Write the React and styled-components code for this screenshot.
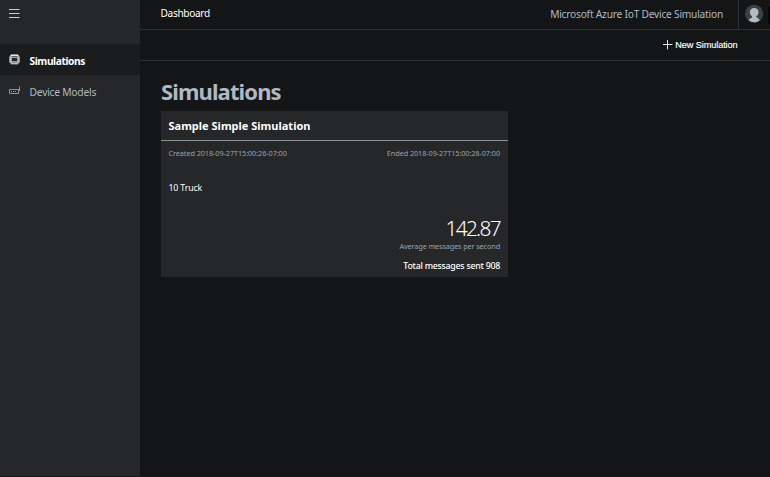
import React from "react";
import styled, { createGlobalStyle } from "styled-components";

const GlobalStyle = createGlobalStyle`
  * { box-sizing: border-box; }
  body {
    margin: 0;
    background: #131516;
    color: #fff;
    font-family: "Noto Sans", "Open Sans", sans-serif;
    font-kerning: normal;
    overflow: hidden;
  }
`;

const Shell = styled.div`
  display: flex;
  height: 477px;
  border-bottom: 1px solid #1b191b;
`;

const Sidebar = styled.nav`
  width: 140px;
  flex: none;
  background: #252729;
`;

const MenuButton = styled.button`
  display: flex;
  align-items: flex-start;
  width: 100%;
  height: 44px;
  padding: 9px 9px 0;
  border: 0;
  background: none;
`;

const NavItem = styled.a`
  display: flex;
  align-items: center;
  height: 31px;
  padding: 2px 0 0 9px;
  gap: 9.5px;
  background: ${(p) => (p.$active ? "#1b1c1e" : "transparent")};
  color: ${(p) => (p.$active ? "#fff" : "#afb9c3")};
  font-size: ${(p) => (p.$active ? "10.2px" : "10.3px")};
  font-weight: ${(p) => (p.$active ? 700 : 400)};
  letter-spacing: ${(p) => (p.$active ? "-0.4px" : "-0.24px")};
  white-space: nowrap;

  svg { margin-top: -3px; }
`;

const Main = styled.main`
  flex: 1;
  min-width: 0;
`;

const Header = styled.header`
  display: flex;
  align-items: stretch;
  height: 30px;
  border-bottom: 1px solid #2e3032;
`;

const Crumb = styled.div`
  flex: 1;
  padding: 0 0 0 20.5px;
  font-size: 10.1px;
  line-height: 27px;
  letter-spacing: -0.32px;
`;

const Product = styled.div`
  padding-right: 15px;
  color: #afb9c3;
  font-size: 10.2px;
  line-height: 29px;
  letter-spacing: -0.22px;
`;

const Profile = styled.div`
  display: flex;
  width: 32px;
  padding: 4px 0 0 6px;
  border-left: 1px solid #2e3032;
`;

const Focus = styled.div`
  width: 2px;
  height: 17px;
  margin: 3px 0 0 4px;
  background: #070809;
`;

const Toolbar = styled.div`
  display: flex;
  align-items: center;
  justify-content: flex-end;
  height: 31px;
  padding-right: 32.5px;
  border-bottom: 1px solid #2e3032;
`;

const ToolButton = styled.button`
  display: flex;
  align-items: center;
  gap: 2.5px;
  padding: 0;
  border: 0;
  background: none;
  color: #fff;
  font: 9.2px "Liberation Sans", sans-serif;
  letter-spacing: -0.12px;
  -webkit-text-stroke: 0.15px #fff;
`;

const Content = styled.section`
  padding: 15px 0 0 21px;
`;

const Title = styled.h1`
  margin: 0;
  height: 35px;
  color: #afb9c3;
  font-size: 22px;
  font-weight: 700;
  line-height: 31px;
  letter-spacing: -0.88px;
`;

const Card = styled.article`
  display: flex;
  flex-direction: column;
  width: 347px;
  height: 166px;
  background: #252729;
`;

const CardTitle = styled.h2`
  margin: 0;
  padding-left: 7.5px;
  height: 30px;
  border-bottom: 1px solid #8b9699;
  font-size: 11px;
  font-weight: 700;
  line-height: 30px;
`;

const Dates = styled.div`
  display: flex;
  justify-content: space-between;
  padding: 6px 8px 0 7.5px;
  color: #9aa2aa;
  font-size: 7.3px;
  line-height: 12px;
  letter-spacing: -0.08px;
`;

const Devices = styled.div`
  padding: 23px 0 0 7.5px;
  font-size: 8.8px;
  line-height: 12px;
  letter-spacing: -0.16px;
`;

const Stats = styled.div`
  display: flex;
  flex-direction: column;
  align-items: flex-end;
  padding: 22px 8px 0;
`;

const Rate = styled.div`
  height: 24px;
  font-size: 20.8px;
  font-weight: 300;
  line-height: 25px;
  letter-spacing: -1.65px;
`;

const RateLabel = styled.div`
  color: #9aa2aa;
  font-size: 7.3px;
  line-height: 12px;
  letter-spacing: -0.13px;
`;

const Total = styled.div`
  margin-top: 8px;
  font-size: 8.8px;
  font-weight: 500;
  line-height: 12px;
  letter-spacing: -0.25px;
`;

const MenuIcon = () => (
  <svg width="11" height="10" viewBox="0 0 11 10" stroke="#c3ccd4" strokeWidth="1">
    <path d="M0 .5H10.5M0 4.5H10.5M0 8.5H10.5" />
  </svg>
);

const ChipIcon = () => (
  <svg width="11" height="11" viewBox="0 0 11 11">
    <path d="M2 0H9V1H10V2.5H11V8.5H10V9.5H9V10.5H2V9.5H1V8.5H0V2.5H1V1H2Z" fill="#929495" />
    <path d="M2 1.5H9V9H2Z" fill="none" stroke="#e3e4e5" />
    <path d="M2.5 2.5H8.5M2.5 8H8.5" stroke="#55585a" strokeWidth=".8" />
    <rect x="2.5" y="3.7" width="6" height="3.6" fill="#202224" stroke="#b5b7b8" strokeWidth=".7" />
  </svg>
);

const DeviceIcon = () => (
  <svg width="11" height="9" viewBox="0 0 11 9" fill="none" stroke="#98a1a9">
    <path d="M.5 3.5H9.5V7.5H.5ZM10.5 .5V5" strokeWidth=".9" />
    <path d="M2 5.5H8" strokeDasharray="1 1" />
  </svg>
);

const PlusIcon = () => (
  <svg width="10" height="10" viewBox="0 0 10 10" stroke="#e4e6e7">
    <path d="M0 4.5H9.4M4.5 0V9.4" />
  </svg>
);

const Avatar = () => (
  <svg width="20" height="20" viewBox="0 0 20 20">
    <circle cx="9.6" cy="9.7" r="9.5" fill="#3d4145" />
    <path
      d="M9.6 3.7C12.3 3.7 14.3 5.5 14.2 8.2C14.1 10.2 13.2 11.4 12 12.3V13.7C13.5 14.2 15 14.8 15.4 16.5C12.2 19.4 7.2 19.4 4 16.6C4.4 14.8 5.8 14.2 7.4 13.7V12.3C6 11.4 5.1 10.1 5.1 8.2C5 5.5 7 3.7 9.6 3.7Z"
      fill="#b3bdc6"
    />
  </svg>
);

export default function App() {
  return (
    <Shell>
      <GlobalStyle />
      <Sidebar>
        <MenuButton aria-label="Menu"><MenuIcon /></MenuButton>
        <NavItem $active><ChipIcon />Simulations</NavItem>
        <NavItem><DeviceIcon />Device Models</NavItem>
      </Sidebar>
      <Main>
        <Header>
          <Crumb>Dashboard</Crumb>
          <Product>Microsoft Azure IoT Device Simulation</Product>
          <Profile><Avatar /><Focus /></Profile>
        </Header>
        <Toolbar>
          <ToolButton><PlusIcon />New Simulation</ToolButton>
        </Toolbar>
        <Content>
          <Title>Simulations</Title>
          <Card>
            <CardTitle>Sample Simple Simulation</CardTitle>
            <Dates>
              <span>Created 2018-09-27T15:00:26-07:00</span>
              <span>Ended 2018-09-27T15:00:28-07:00</span>
            </Dates>
            <Devices>10 Truck</Devices>
            <Stats>
              <Rate>142.87</Rate>
              <RateLabel>Average messages per second</RateLabel>
              <Total>Total messages sent 908</Total>
            </Stats>
          </Card>
        </Content>
      </Main>
    </Shell>
  );
}
